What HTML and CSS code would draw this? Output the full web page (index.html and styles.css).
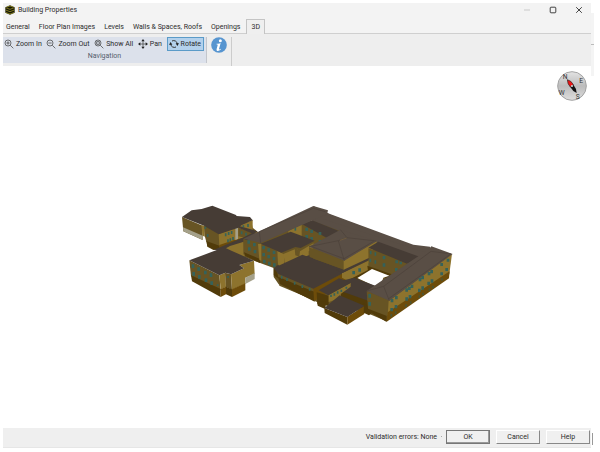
FILE: index.html
```html
<!DOCTYPE html>
<html lang="en">
<head>
<meta charset="utf-8">
<title>Building Properties</title>
<link rel="stylesheet" href="styles.css">
</head>
<body>
<div class="window">
  <header class="titlebar">
    <svg class="app-icon" viewBox="0 0 30 30" aria-hidden="true">
      <path d="M1 7 15 1l14 6v16l-14 6-14-6z" fill="#171708"/>
      <path d="M2 8l13 5 13-5M2 15l13 5 13-5M2 22l13 5 13-5M6 6l9-3 9 3" fill="none" stroke="#b3ac25" stroke-width="2"/>
    </svg>
    <h1 class="title">Building Properties</h1>
    <div class="controls">
      <button class="control" aria-label="Minimize"><svg viewBox="0 0 8 8"><path d="M1 4h6" stroke="#c9c9c9"/></svg></button>
      <button class="control" aria-label="Maximize"><svg viewBox="0 0 8 8"><rect x="1.2" y="1.2" width="5.6" height="5.6" rx=".8" fill="none" stroke="#444"/></svg></button>
      <button class="control" aria-label="Close"><svg viewBox="0 0 8 8"><path d="M1.200 1.200l5.600 5.600M6.800 1.200L1.200 6.800" stroke="#444"/></svg></button>
    </div>
  </header>
  <nav class="tabs">
    <button class="tab">General</button>
    <button class="tab">Floor Plan Images</button>
    <button class="tab">Levels</button>
    <button class="tab">Walls &amp; Spaces, Roofs</button>
    <button class="tab">Openings</button>
    <button class="tab tab-active">3D</button>
  </nav>
  <div class="ribbon">
    <section class="group">
      <div class="tools">
        <button class="tool"><svg class="tool-icon" viewBox="0 0 30 30"><circle cx="12" cy="12" r="9"/><path d="M19 19l9 9M7 12h10M12 7v10"/></svg>Zoom In</button>
        <button class="tool"><svg class="tool-icon" viewBox="0 0 30 30"><circle cx="12" cy="12" r="9"/><path d="M19 19l9 9M7 12h10"/></svg>Zoom Out</button>
        <button class="tool"><svg class="tool-icon" viewBox="0 0 30 30"><circle cx="12" cy="12" r="9"/><path d="M19 19l9 9M8 8h8v8H8z"/></svg>Show All</button>
        <button class="tool"><svg class="tool-icon" viewBox="0 0 30 30"><path d="M15 4v22M4 15h22"/><path d="M15 0l5 7H10zM15 30l5-7H10zM0 15l7-5v10zM30 15l-7-5v10z" fill="#222" stroke="none"/></svg>Pan</button>
        <button class="tool tool-active"><svg class="tool-icon" viewBox="0 0 30 30"><path d="M9 6a11 11 0 0 1 16 9M21 24A11 11 0 0 1 5 15" stroke-width="3"/><path d="M20 13h10l-5 8zM0 17h10L5 9z" fill="#222" stroke="none"/></svg>Rotate</button>
      </div>
      <div class="group-name">Navigation</div>
    </section>
    <div class="info-group">
      <button class="info" aria-label="Information"><svg viewBox="0 0 48 48"><circle cx="24" cy="24" r="23.500" fill="#5795d0"/><circle cx="28" cy="11" r="4.500" fill="#fff"/><path d="M17 20q8 1 12-2l-5 18q0 3 5-1l1 2q-6 6-11 5-4-1-2-7l3-10q1-3-4-3z" fill="#fff"/></svg></button>
    </div>
  </div>
  <main class="viewport">
    <svg class="scene" viewBox="0 0 588 362" role="img" aria-label="3D building model">
      <g transform="translate(167 129) scale(.33333)">
        <!-- ground mass under all wings -->
        <path class="mid" d="M104 92L244 80 248 98 264 112 474 66 776 172 842 180 836 236 650 379 582 350 462 330 434 318 326 268 311 246 311 219 222 186 182 160 130 165 112 155z"/>
        <!-- north-west wing -->
        <path class="mid" d="M36 66l62 26v43l-58-26z"/>
        <path class="stone" d="M39 97l59 25v13l-58-26z"/>
        <path class="lit" d="M94 90l10 3v32l-6-3z"/>
        <path class="mid" d="M102 92l46 26v36l-39-14-5-18z"/>
        <path class="base" d="M109 138l39 14v9l-16 3-20-10z"/>
        <path class="lit" d="M146 118l58-24 44-20v30l16 8-18 16-98 25z"/>
        <path class="base-lit" d="M148 150l44-15 34-8-58 28-20 7z"/>
        <path class="stone" d="M196 96l8-3v39l-8 3z"/>
        <path class="mid" d="M205 99l50 15v12l-15 6-35-8z"/>
        <path class="roof" d="M205 92l58 17-12 8-46-19z"/>
        <path class="roof" d="M36 66l29-20 30-4 32-10 71 28 2 3 40 3 8 10-33 14-10 8-59 20-44-26z"/>
        <path class="glass" d="M167 115v9M176 111v9M185 108v9M174 133v9M181 130v9M189 126v9M113 117v9M106 95v6M215 109v9M228 113v9M234 87v9M220 91v6"/>
        <!-- link roof and west hall -->
        <path class="lit" d="M150 162l70-32 4 58-24-8z"/>
        <path class="roof" d="M130 165l88-37 30-15 22 12-90 28-22 12z"/>
        <path class="mid" d="M58 196l90 45 4 44-89-41z"/>
        <path class="base" d="M63 241l89 41v24l-86-47z"/>
        <path class="lit" d="M148 241l18-8 2 43-16 7z"/>
        <path class="base-lit" d="M152 282l16-7v23l-16 8z"/>
        <path class="mid" d="M165 233l18 5 3 46-18-8z"/>
        <path class="base" d="M168 275l18 8v23l-18-8z"/>
        <path class="lit" d="M183 238l39-18-14-10 44-13 2 40-28 11v18l-40 18z"/>
        <path class="stone" d="M226 248l28-14v18l-28 15z"/>
        <path class="base-lit" d="M186 283l40-18v21l-40 20z"/>
        <path class="roof" d="M58 196l104-39 24 11 66 29-44 13 14 10-39 18-17-5-18 8z"/>
        <path class="pane" d="M69 208v11M86 217v11M106 227v11M123 235v11M71 231v11M88 240v11M108 250v11M125 259v11"/>
        <path class="glass" d="M174 243v6M143 268v5"/>
        <!-- inner courtyard north side -->
        <path class="mid" d="M394 89l80 32-20 45-60-42z"/>
        <path class="lit" d="M355 108l40-20v38l-40-12z"/>
        <path class="roof-light" d="M430 62l45-5 306 115-35 23-320-118z"/>
        <path class="roof-light" d="M430 33l50 24 250 92 50 6 0 22-320-105z"/>
        <path class="roof" d="M397 88l29-12 90 36-40 20z"/>
        <path class="pane" d="M410 98v10M425 104v10M450 111v9M410 120v10M425 126v10M450 135v9"/>
        <path class="glass" d="M376 97v10"/>
        <!-- west block facade -->
        <path class="mid" d="M220 131l50 19 52 21v47l-102-40z"/>
        <path class="base" d="M222 172l48 20v12l-44-21z"/>
        <path class="mid" d="M270 146l58 22 3 40-16 10-45-20z"/>
        <path class="lit" d="M264 147l10 0v50l-6-2z"/>
        <path class="roof" d="M316 214l81-36 30 4 8 28-60 30z"/>
        <path class="lit" d="M322 168l20 10 2 30-16 6-4-6z"/>
        <path class="lit" d="M340 177l38-16 12 8 40-24 4 12-18 12v12l-70 28z"/>
        <path class="mid" d="M374 159l16 8-2 18-12-4z"/>
        <path class="roof" d="M272 146l90-36 72 27-42 22-16-3-42 17z"/>
        <path class="roof-light" d="M220 131l210-98 44 13-3 12-41 17-158 69z"/>
        <path class="ridge" d="M268 110l4 34M268 110l162-70 36 10"/>
        <path class="pane" d="M236 136v10M253 144v10M238 157v10M255 165v10M281 153v10M296 160v10M312 167v10M281 174v10M296 180v10M312 186v10M283 194v11M298 200v11M313 205v10"/>
        <!-- central hall -->
        <path class="base" d="M311 219l20 6 0 29-20-13z"/>
        <path class="mid" d="M322 230l112 52 2 35-108-45z"/>
        <path class="base" d="M324 245l110 46v29l-104-53z"/>
        <path class="base-lit" d="M430 278l98-48 0 30-96 58z"/>
        <path class="roof" d="M311 219l86-40 136 48-103 54-105-44z"/>
        <path class="glass" d="M335 242v9M351 249v9M374 260v9M397 270v9M419 278v9"/>
        <path class="lit" d="M516 234l92-43v34l-70 35-22-12z"/>
        <path class="roof" d="M500 225l96-40 12 5-90 44z"/>
        <path class="pane" d="M551 228v10M569 220v10M600 204v10"/>
        <path class="mid" d="M417 157l106 40v28l-104-39z"/>
        <path class="lit" d="M521 196l99-57v17l-22 18v14l-77 36z"/>
        <path class="roof-light" d="M417 155l94-51 109 34-97 59z"/>
        <path class="ridge" d="M417 155l88-18 18 60M505 137l26-9 88 10M531 128l-20-24M428 156l94 35 89-52"/>
        <path d="M510 136l20-7" stroke="#7b6540" stroke-width="2"/>
        <!-- inner courtyard east side -->
        <path class="mid" d="M595 160l120 44-40 40-79-20z"/>
        <path class="base" d="M592 212l80 28-12 14-66-27z"/>
        <path class="roof" d="M595 158l30-18 128 47-42 19z"/>
        <path class="pane" d="M642 183v10M642 205v10M680 196v9M692 200v8M679 219v10"/>
        <path class="glass" d="M602 168v10M616 172v10M601 191v10M616 196v10"/>
        <path class="base" d="M540 253l64-33v11l-42 25z"/>
        <path fill="#fff" d="M562 249l44-27 52 20-18 6-7 20-14 8z"/>
        <!-- south annexes -->
        <path class="roof" d="M512 258l40-10 72 27-30 14-3 36-80-35z"/>
        <path class="base" d="M512 288l82 29v34l-80-41z"/>
        <path class="base" d="M440 292l36 10v30l-34-4z"/>
        <path class="lit" d="M476 300l66-37v12l-30 22v12l-36 12z"/>
        <path class="roof" d="M446 286l61-36 36 13-68 38z"/>
        <path class="glass" d="M483 299v7M493 295v7M503 289v7M514 284v7M529 275v6"/>
        <path class="base" d="M442 318l25 2 0 23-24-11zM463 339l69 27v23l-68-35z"/>
        <path class="base-lit" d="M532 365l51-32v24l-51 32z"/>
        <path class="roof" d="M463 339l46-38 74 31-51 34z"/>
        <path class="base" d="M582 326l68 32v23l-45-26-8 6-16-8z"/>
        <!-- east wing -->
        <path class="mid" d="M590 288l68 29-5 47-59-23z"/>
        <path class="lit" d="M656 318l190-142-8 62-185 122z"/>
        <path class="base-lit" d="M653 352l186-123-2 21-187 130z"/>
        <path class="roof-light" d="M590 288l45-31 141-94 8-9 64 23-190 140z"/>
        <path class="ridge" d="M658 317l-17-43 142-105 60 8M641 274l-48 13M656 311l186-134"/>
        <path class="pane" d="M599 297v11M599 321v11M666 312v10M679 303v10M710 280v10M718 275v10M726 269v10M750 249v10M758 243v10M777 231v10M785 225v10M815 204v9M834 191v9M665 339v10M678 330v10M710 307v10M720 300v10M748 281v10M758 274v10M776 260v10M786 253v10M815 232v9M830 219v9"/>
        <path class="glass dim" d="M664 357v8M677 349v8M708 328v8M722 319v8M748 301v8M759 293v8M778 280v8M789 272v8M816 250v7"/>
      </g>
    </svg>
    <svg class="compass" viewBox="0 0 90 90" role="img" aria-label="Compass">
      <defs><linearGradient id="dial" x2="0" y2="1"><stop offset="0" stop-color="#e3e3e3"/><stop offset=".5" stop-color="#bcbcbc"/><stop offset="1" stop-color="#dedede"/></linearGradient></defs>
      <circle cx="45" cy="45" r="43" fill="url(#dial)" stroke="#a4a4a4" stroke-width="3"/>
      <path d="M31 26q12 3 18 15l-9 7q-9-10-9-22z" fill="#f01414" stroke="#222" stroke-width="2"/>
      <path d="M49 41l-9 7q7 13 19 18-1-15-10-25z" fill="#111"/>
      <circle cx="45" cy="45" r="3" fill="#ddd"/>
      <g class="points"><text x="17" y="23">N</text><text x="67" y="35">E</text><text x="5" y="72">W</text><text x="56" y="84">S</text></g>
    </svg>
  </main>
  <footer class="footer">
    <span class="status">Validation errors: None</span>
    <span class="dot"></span>
    <button class="action action-default">OK</button>
    <button class="action">Cancel</button>
    <button class="action">Help</button>
  </footer>
  <div class="edge"></div>
  <div class="edge-foot"></div>
</div>
</body>
</html>
```
FILE: styles.css
```css
* { box-sizing: border-box; }
body {
  margin: 0;
  padding: 3px 9px 4px 3px;
  background: #fff;
  color: #2b2b2b;
  font: 7px/10px Roboto, "Open Sans", sans-serif;
}
button {
  margin: 0;
  padding: 0;
  border: 0;
  background: none;
  color: inherit;
  font: inherit;
}
svg { display: block; }
.window {
  position: relative;
  display: flex;
  flex-direction: column;
  min-height: calc(100vh - 7px);
}
.titlebar {
  display: flex;
  align-items: center;
  height: 14px;
  padding: 0 8px 0 2px;
  background: #f3f3f3;
}
.app-icon { width: 10px; height: 10px; }
.title { margin: 0 0 0 3px; font: inherit; }
.controls { display: flex; gap: 18px; margin-left: auto; }
.control { width: 8px; height: 8px; }
.tabs {
  display: flex;
  align-items: flex-end;
  height: 17px;
  background: #f3f3f3;
  box-shadow: inset 0 -1px #cfcfcf;
}
.tab { height: 15px; padding: 0 6px 0 3px; white-space: nowrap; }
.tab-active {
  padding: 0 4px;
  border: 1px solid #c4c4c4;
  border-bottom: 0;
  background: #efefef;
}
.ribbon { display: flex; height: 32px; padding-top: 3px; background: #eee; }
.group {
  width: 204px;
  height: 26px;
  border-right: 1px solid #c3c6cc;
  background: #dce1eb;
}
.tools { display: flex; justify-content: space-between; height: 14px; padding: 0 2px 0 1px; }
.tool { display: flex; align-items: center; gap: 2px; white-space: nowrap; }
.tool-icon { width: 10px; height: 10px; fill: none; stroke: #333; stroke-width: 2; }
.tool-active { padding: 0 2px 0 1px; border: 1px solid #5b9bc8; background: #b3d1ec; }
.group-name { text-align: center; color: #555e6c; }
.info-group { width: 25px; padding-left: 4px; border-right: 1px solid #ccc; }
.info, .info svg { width: 16px; height: 16px; }
.viewport { position: relative; flex: 1; background: #fff; }
.scene { width: 100%; height: auto; }
.roof { fill: #463c35; }
.roof-light { fill: #594e45; }
.lit { fill: #8d732d; }
.mid { fill: #675424; }
.base { fill: #513b0a; }
.base-lit { fill: #6d4c0a; }
.stone { fill: #a5a18a; }
.ridge { fill: none; stroke: #4b413a; stroke-width: 2; }
.pane { fill: none; stroke: #35625a; stroke-width: 8; }
.glass { fill: none; stroke: #35625a; stroke-width: 5; }
.dim { stroke: #4c5534; }
.compass { position: absolute; top: 5px; right: 4px; width: 30px; height: 30px; }
.points { fill: #333; font-size: 20px; }
.footer {
  display: flex;
  align-items: center;
  height: 20px;
  padding: 0 1px 2px;
  background: #efefef;
  border-bottom: 1px solid #e6e6e6;
}
.status { margin-left: auto; }
.dot { width: 1px; height: 1px; margin: 0 4px; background: #aaa; }
.action {
  width: 44px;
  height: 14px;
  margin-left: 6px;
  border: 1px solid;
  border-color: #fff #888 #888 #fff;
  background: #f0f0f0;
}
.action-default { margin-left: 0; border-color: #777; box-shadow: inset -1px -1px #999; }
.edge {
  position: absolute;
  top: 10px;
  right: -3px;
  width: 3px;
  height: 63px;
  background: linear-gradient(#f4f4f4 31px, #bbb 31px 32px, #f4f4f4 32px);
}
.edge-foot { position: absolute; right: -2px; bottom: 3px; width: 1px; height: 12px; background: #999; }
```
